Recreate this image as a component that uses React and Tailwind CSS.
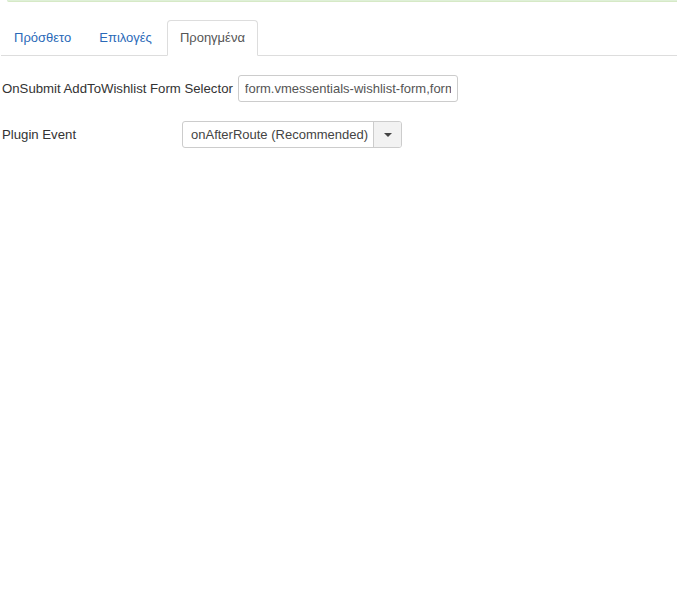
import React, { useState } from 'react';

function App() {
  const [tab, setTab] = useState('advanced');
  const tabs = [
    { id: 'addon', label: 'Πρόσθετο' },
    { id: 'options', label: 'Επιλογές' },
    { id: 'advanced', label: 'Προηγμένα' },
  ];

  return (
    <div
      className="min-h-[590px] bg-white text-[13.2px] text-[#333]"
      style={{ fontFamily: '"Liberation Sans", Arial, sans-serif' }}
    >
      {/* bottom of the message box above */}
      <div className="ml-[7px] h-[2px] rounded-bl-[4px] border-b border-[#d6e9c6] bg-[#dff0d8]" />

      {/* Tabs */}
      <ul className="mt-[18px] ml-[1px] flex border-b border-[#ddd] text-[13px]">
        {tabs.map(t => (
          <li key={t.id} className="mr-[2px] -mb-px">
            <button
              onClick={() => setTab(t.id)}
              className={`block rounded-t-[4px] border px-[12px] py-[8px] leading-[18px] ${
                tab === t.id
                  ? 'border-[#ddd] border-b-transparent bg-white text-[#555]'
                  : 'border-transparent text-[#2a69b8] hover:bg-[#eee]'
              }`}
            >
              {t.label}
            </button>
          </li>
        ))}
      </ul>

      {/* Form */}
      <div className="mt-[19px] pl-[2px]">
        <div className="flex items-center">
          <label className="pr-[5px] leading-[18px]">OnSubmit AddToWishlist Form Selector</label>
          <input
            type="text"
            defaultValue="form.vmessentials-wishlist-form,form.vmessentials-wishlist-form-2"
            className="h-[27px] w-[220px] rounded-[3px] border border-[#ccc] px-[6px] text-[13px] text-[#555] outline-none"
          />
        </div>

        <div className="mt-[19px] flex items-center">
          <label className="w-[180px] leading-[18px]">Plugin Event</label>
          <div className="flex h-[27px] w-[220px] overflow-hidden rounded-[3px] border border-[#ccc] bg-white text-[13px]">
            <div className="flex flex-1 items-center pl-[8px] text-[#444]">onAfterRoute (Recommended)</div>
            <div className="flex w-[28px] items-center justify-center border-l border-[#ccc] bg-[#f2f2f2]">
              <div className="h-0 w-0 border-x-[4px] border-t-[4px] border-x-transparent border-t-[#444]" />
            </div>
          </div>
        </div>
      </div>
    </div>
  );
}

export default App;
